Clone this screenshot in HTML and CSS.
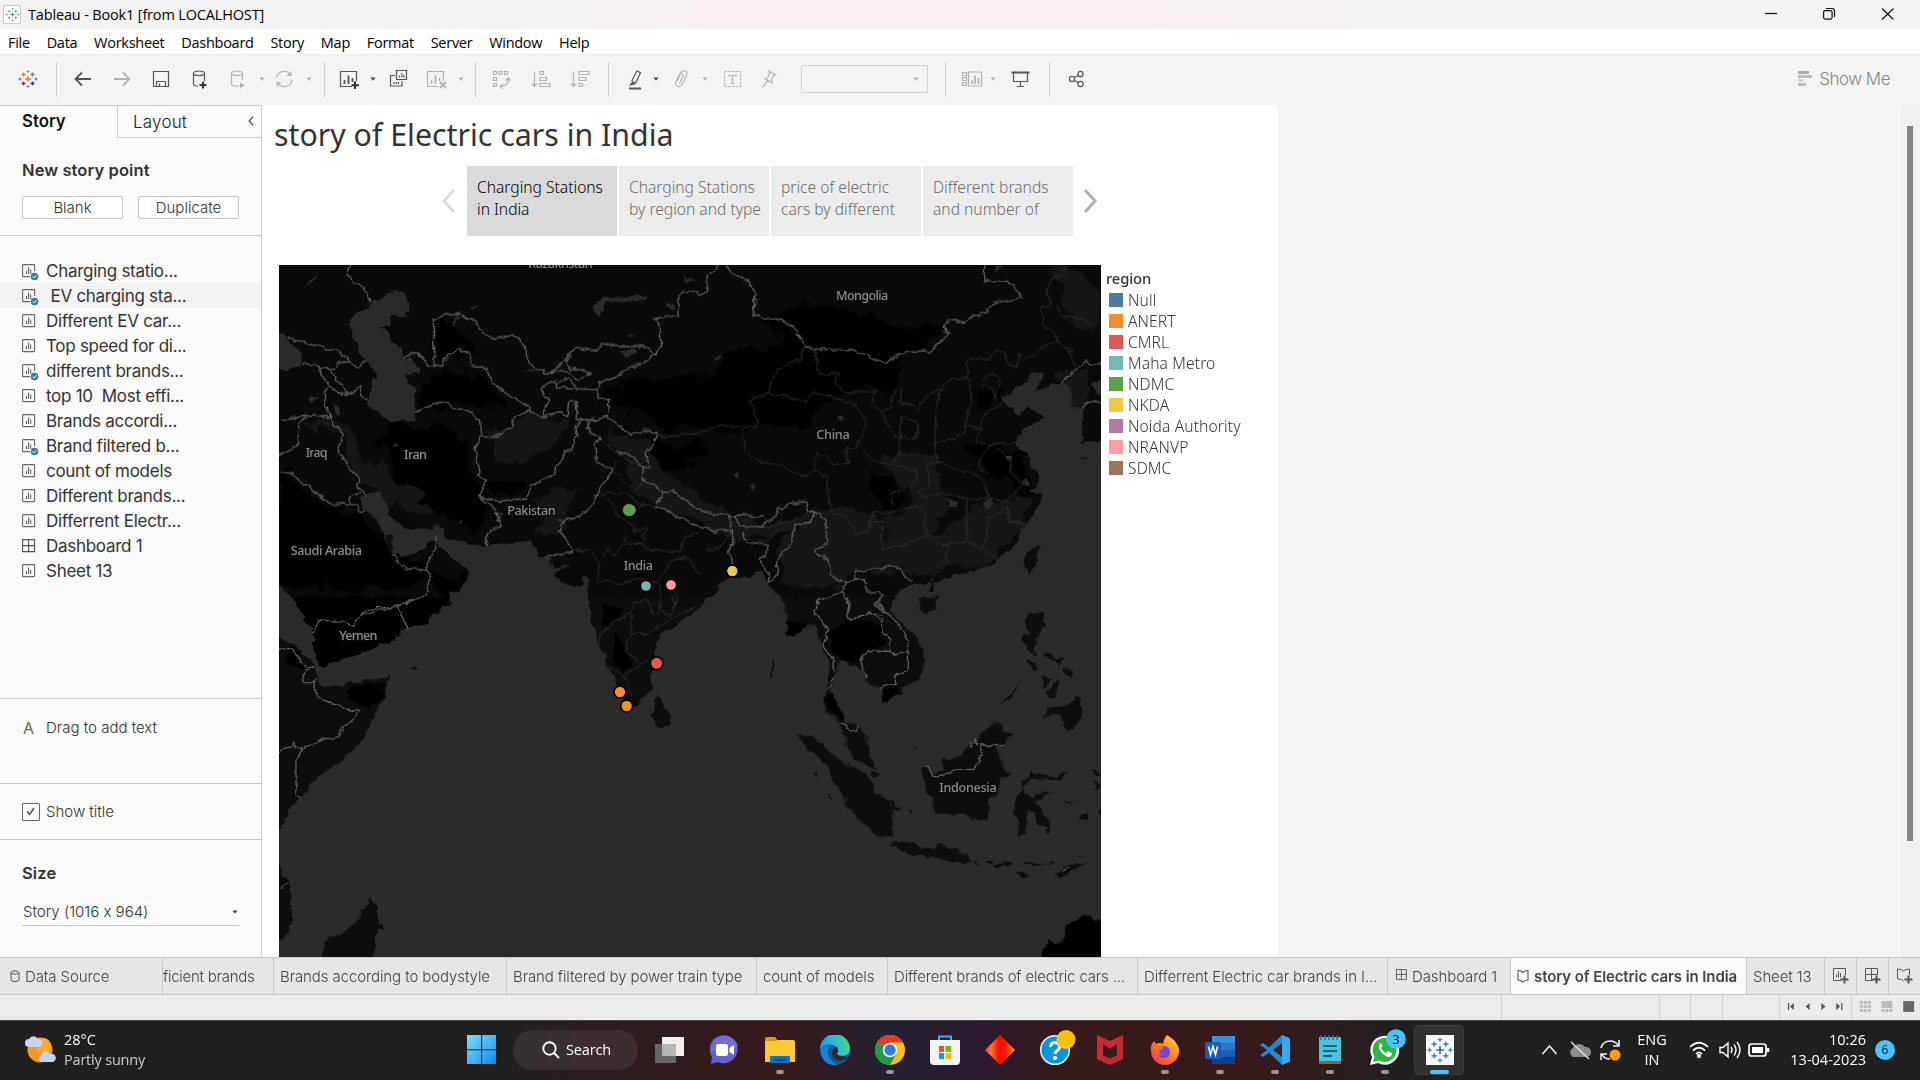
FILE: index.html
```html
<!DOCTYPE html>
<html lang="en">
<head>
<meta charset="utf-8">
<title>Tableau - Book1</title>
<link rel="stylesheet" href="styles.css">
</head>
<body>
<svg class="defs" width="0" height="0" aria-hidden="true">
  <defs>
    <symbol id="sheet" viewBox="0 0 17 17"><rect x=".6" y=".6" width="12" height="12" rx=".8" fill="none" stroke="#666" stroke-width="1.1"/><path d="M4.5 10V7M6.6 10V3.5M8.7 10V5.5" stroke="#555" fill="none"/></symbol>
    <symbol id="used" viewBox="0 0 17 17"><path d="M8 12.600H1.200a.6.6 0 0 1-.6-.6V1.200a.6.6 0 0 1 .6-.6H12a.6.6 0 0 1 .6.6V7" fill="none" stroke="#666" stroke-width="1.1"/><path d="M4.500 10V7M6.600 10V3.500M8.700 10V5.500" stroke="#555" fill="none"/><circle cx="12.500" cy="12.500" r="3.800" fill="#377f9f"/><path d="M10.700 12.600l1.400 1.400 2.200-2.800" stroke="#fff" fill="none"/></symbol>
    <symbol id="dash" viewBox="0 0 17 17"><path d="M.6.600h12v12H.6zM6.600.6v12M.6 6.600h12" fill="none" stroke="#555" stroke-width="1.1"/></symbol>
    <symbol id="book" viewBox="0 0 12 14"><path d="M6 3.500Q4 1.500 1 1.500V11q3 0 5 2 2-2 5-2V1.500Q8 1.500 6 3.500z" fill="none" stroke="#555" stroke-width="1.1"/></symbol>
    <symbol id="caret" viewBox="0 0 8 8"><path d="M1.500 2.500h5L4 5.800z" fill="currentColor"/></symbol>
    <symbol id="sparkle" viewBox="0 0 30 30"><g fill="none" stroke="currentColor"><path d="M15 10.500v9M10.500 15h9" stroke-width="1.800"/><path d="M8.500 5.500v6M5.500 8.500h6M21.500 5.500v6M18.500 8.500h6M8.500 18.500v6M5.500 21.500h6M21.500 18.500v6M18.500 21.500h6" stroke-width="1.400"/><path d="M15 1v5M12.500 3.500h5M15 24v5M12.500 26.500h5M3.500 12.500v5M1 15h5M26.500 12.500v5M24 15h5" stroke-width="1.100"/></g></symbol>
  </defs>
</svg>

<header class="titlebar">
  <span class="app-icon"><svg width="15" height="15"><use href="#sparkle"/></svg></span>
  <span class="app-title">Tableau - Book1 [from LOCALHOST]</span>
  <svg class="winctl" width="150" height="29" viewBox="0 0 150 29" fill="none" stroke="#111" stroke-width="1.200">
    <path d="M15 13.500h12"/><rect x="73.600" y="10.600" width="8.500" height="8.500" rx="1.500"/><path d="M76 8.500h6q2.500 0 2.500 2.500v6"/><path d="M132 8.500l11.500 11M143.500 8.500L132 19.500"/>
  </svg>
</header>

<nav class="menubar"><span>File</span><span>Data</span><span>Worksheet</span><span>Dashboard</span><span>Story</span><span>Map</span><span>Format</span><span>Server</span><span>Window</span><span>Help</span></nav>

<div class="toolbar">
  <svg class="ic" viewBox="0 0 24 24"><g fill="none" stroke-width="1.500"><path d="M12 9v6M9 12h6" stroke="#eb7a34"/><path d="M7.500 5.500v4M5.500 7.500h4" stroke="#e8762d"/><path d="M16.500 5.500v4M14.500 7.500h4" stroke="#5b879b"/><path d="M7.500 14.500v4M5.500 16.500h4" stroke="#c72037"/><path d="M16.500 14.500v4M14.500 16.500h4" stroke="#1f457e"/><path d="M12 3v3M10.500 4.500h3M12 18v3M10.500 19.500h3" stroke="#7199a6" stroke-width="1"/><path d="M4 10.500v3M2.500 12h3M20 10.500v3M18.500 12h3" stroke="#5b6591" stroke-width="1"/></g></svg>
  <i class="sep m16"></i>
  <svg class="ic m14 on" viewBox="0 0 24 24"><path d="M20 12H5M11 5.500L4.500 12l6.500 6.500" stroke-width="1.800"/></svg>
  <svg class="ic m15" viewBox="0 0 24 24"><path d="M4 12h15M13 5.500l6.500 6.500-6.500 6.500" stroke-width="1.800"/></svg>
  <svg class="ic m15 on" viewBox="0 0 24 24"><path d="M4.500 4.500h15v15h-15zM7.500 19.500v-5h9v5M10.500 19v-2.500"/></svg>
  <svg class="ic m14 on" viewBox="0 0 24 24"><path d="M11 19H9q-2.500-.5-2.500-2V6.500M17.500 6.500V14"/><ellipse cx="12" cy="6.300" rx="5.500" ry="2.300"/><path d="M16 14.500v7M12.500 18h7" stroke="#333" stroke-width="2"/></svg>
  <svg class="ic m15" viewBox="0 0 24 24"><path d="M13 19H8q-2.500-.5-2.500-2V6.500M16.500 6.500V13"/><ellipse cx="11" cy="6.300" rx="5.500" ry="2.300"/><path d="M14 15.500l5 3-5 3z" fill="#b4b4b4" stroke="none"/></svg>
  <svg class="caret m8"><use href="#caret"/></svg>
  <svg class="ic m6" viewBox="0 0 24 24"><path d="M4.500 11a7.800 7.800 0 0 1 14-3.500M20 13a7.800 7.800 0 0 1-14 3.500"/><path d="M19.500 4v5h-5zM4.500 20v-5h5z" fill="#b4b4b4" stroke="none"/></svg>
  <svg class="caret m9"><use href="#caret"/></svg>
  <i class="sep m11"></i>
  <svg class="ic m13 on" viewBox="0 0 24 24"><path d="M14 19.500H2.500v-15h16V14"/><path d="M6.500 17v-4M10.500 17V8.500M14.500 15V11" stroke-width="1.800"/><path d="M17 14.500v7.500M13.500 18.300h7.500" stroke="#333" stroke-width="2"/></svg>
  <svg class="caret m7 dark"><use href="#caret"/></svg>
  <svg class="ic m9 on" viewBox="0 0 24 24"><path d="M10.500 3.500h10v9h-10zM9 8.500H4.500v10.500h11.500V14"/><path d="M13.500 10.500v-2M15.800 10.500v-4.500M18 10.500V8M8 17v-2M10.300 17v-2M12.500 17v-2"/></svg>
  <svg class="ic m15" viewBox="0 0 24 24"><path d="M13 19.500H2.500v-15h16V14"/><path d="M6.500 17v-4M10.500 17V8.500M14.500 14v-3" stroke-width="1.600"/><path d="M15 15l6 6M21 15l-6 6" stroke-width="2"/></svg>
  <svg class="caret m8"><use href="#caret"/></svg>
  <i class="sep m10"></i>
  <svg class="ic m13" viewBox="0 0 24 24"><path d="M4.500 4.500h3v3h-3zM10 4.500h3v3h-3zM15.500 4.500h3v3h-3zM4.500 10.500h3v3h-3zM4.500 16.500h3v3h-3z"/><path d="M19.500 11q.5 8-8 8.500M17 13.500l2.500-3 2 3M14 17l-3 2.500 3 2.500"/></svg>
  <svg class="ic m16" viewBox="0 0 24 24"><path d="M5.500 4.500v15M3 16.500l2.500 3 2.500-3M11 4.500h3.500v3H11zM11 10.500h6.500v3H11zM11 16.500h10v3H11z"/></svg>
  <svg class="ic m15" viewBox="0 0 24 24"><path d="M5.500 4.500v15M3 16.500l2.500 3 2.500-3M11 4.500h10v3H11zM11 10.500h7v3h-7zM11 16.500h3.500v3H11z"/></svg>
  <i class="sep m16"></i>
  <svg class="ic m14 on" viewBox="0 0 24 24"><path d="M9 13.500l5-9.500 3.500 1.700L13 15.500l-2.500 2zM7.500 18l2-3 2 1z"/><path d="M6 21.500h12" stroke-width="2"/></svg>
  <svg class="caret m5 dark"><use href="#caret"/></svg>
  <svg class="ic m9" viewBox="0 0 24 24"><path d="M8 14l3.500-8q2-3.500 5-2 2.500 1.500 1 4.500l-4.500 9q-2 3-4.500 1.700-3-1.500-1.500-4.700l3.500-7q1-1.500 2.500-.8t1 2.300l-3.500 7.500"/></svg>
  <svg class="caret m8"><use href="#caret"/></svg>
  <svg class="ic m11" viewBox="0 0 24 24"><path d="M4.500 4.500h16v15h-16z" stroke-dasharray="2.500 1.200"/><path d="M9 10V8.500h7V10M12.500 8.500v8M10.500 16.500h4"/></svg>
  <svg class="ic m13" viewBox="0 0 24 24"><path d="M12 4l6.500 4-2 .8-2 4 .5 3-7-4 2.500-.8 2-4zM10.500 13.500L6 20"/></svg>
  <span class="combo"><svg class="caret"><use href="#caret"/></svg></span>
  <i class="sep m17"></i>
  <svg class="ic m14" viewBox="0 0 24 24"><path d="M2.500 5.500h4v3h-4zM2.500 10.500h4v3h-4zM2.500 15.500h4v3h-4zM8.500 5h13v14h-13z"/><path d="M12 17v-3.500M15 17V8.500M18.500 17v-6" stroke-width="1.800"/></svg>
  <svg class="caret m5"><use href="#caret"/></svg>
  <svg class="ic m11 on" viewBox="0 0 24 24"><path d="M3.500 5.500h18" stroke-width="2"/><path d="M5.500 6v8.500h14V6M12.500 14.500v5M9 19.500h7"/></svg>
  <i class="sep m17"></i>
  <svg class="ic m14 on" viewBox="0 0 24 24"><circle cx="8" cy="12" r="2.600"/><circle cx="16.500" cy="7" r="2.600"/><circle cx="16.500" cy="17" r="2.600"/><path d="M10.300 10.700l4-2.400M10.300 13.300l4 2.400"/></svg>
  <div class="showme"><svg width="15" height="16" viewBox="0 0 15 16"><path d="M0 0h11v3H0z" fill="#a9a9a9"/><path d="M0 4h14v3H0zM0 12h8v3H0z" fill="#bdbdbd"/><path d="M0 8h5v3H0z" fill="#d2d2d2"/></svg><span>Show Me</span></div>
</div>

<main class="work">
  <aside class="side">
    <div class="tabs"><b>Story</b><div class="tab2"><span>Layout</span><svg width="6" height="10" viewBox="0 0 6 10"><path d="M5 .8L1.200 5 5 9.200" fill="none" stroke="#555" stroke-width="1.300"/></svg></div></div>
    <section class="newpoint"><h2>New story point</h2><div class="btns"><span class="btn"><span>Blank</span></span><span class="btn"><span>Duplicate</span></span></div></section>
    <ul class="sheets">
      <li><svg><use href="#used"/></svg><span>Charging statio...</span></li>
      <li class="hover"><svg><use href="#used"/></svg><span>&nbsp;EV charging sta...</span></li>
      <li><svg><use href="#sheet"/></svg><span>Different EV car...</span></li>
      <li><svg><use href="#sheet"/></svg><span>Top speed for di...</span></li>
      <li><svg><use href="#used"/></svg><span>different brands...</span></li>
      <li><svg><use href="#sheet"/></svg><span>top 10&nbsp; Most effi...</span></li>
      <li><svg><use href="#sheet"/></svg><span>Brands accordi...</span></li>
      <li><svg><use href="#used"/></svg><span>Brand filtered b...</span></li>
      <li><svg><use href="#sheet"/></svg><span>count of models</span></li>
      <li><svg><use href="#sheet"/></svg><span>Different brands...</span></li>
      <li><svg><use href="#sheet"/></svg><span>Differrent Electr...</span></li>
      <li><svg><use href="#dash"/></svg><span>Dashboard 1</span></li>
      <li><svg><use href="#sheet"/></svg><span>Sheet 13</span></li>
    </ul>
    <section class="dragtext"><em>A</em><span>Drag to add text</span></section>
    <section class="showtitle"><i class="check"><svg width="16" height="16" viewBox="0 0 16 16"><path d="M4 7.500l2.500 3L11 4" fill="none" stroke="#555" stroke-width="1.500"/></svg></i><span>Show title</span></section>
    <section class="size"><h2>Size</h2><div class="select"><span>Story (1016 x 964)</span><svg class="caret dark"><use href="#caret"/></svg></div></section>
  </aside>

  <article class="story">
    <h1><span>story of Electric cars in India</span></h1>
    <div class="points">
      <svg width="15" height="26" viewBox="0 0 15 26"><path d="M13 2L3 13l10 11" fill="none" stroke="#dcdcdc" stroke-width="3"/></svg>
      <div class="point active"><span>Charging Stations<br>in India</span></div>
      <div class="point"><span>Charging Stations<br>by region and type</span></div>
      <div class="point"><span>price of electric<br>cars by different</span></div>
      <div class="point"><span>Different brands<br>and number of</span></div>
      <svg width="15" height="26" viewBox="0 0 15 26"><path d="M2 2l10 11L2 24" fill="none" stroke="#b0b0b0" stroke-width="3"/></svg>
    </div>
    <div class="view">
      <svg class="map" viewBox="27 30 2466 2076">
        <defs>
          <filter id="rough" filterUnits="userSpaceOnUse" x="0" y="0" width="2520" height="2130"><feTurbulence type="fractalNoise" baseFrequency=".035" numOctaves="3" seed="4"/><feDisplacementMap in="SourceGraphic" scale="22" xChannelSelector="R" yChannelSelector="G"/></filter>
          <filter id="soft" filterUnits="userSpaceOnUse" x="0" y="0" width="2520" height="2130"><feTurbulence type="fractalNoise" baseFrequency=".012" numOctaves="4" seed="9" result="n"/><feGaussianBlur in="SourceGraphic" stdDeviation="5"/><feDisplacementMap in2="n" scale="110" xChannelSelector="R" yChannelSelector="G"/></filter>
        </defs>
        <rect x="0" y="0" width="2520" height="2130" fill="#2b2b2b"/>
        <rect x="0" y="0" width="2520" height="1040" fill="#0a0a0a"/>
        <g filter="url(#soft)">
          <g fill="#000">
            <path d="M0 780L200 760 330 840 480 940 600 950 600 1000 60 1000 0 960z"/><path d="M27 640L80 680 170 760 240 760 240 830 27 830z"/>
            <path d="M330 540L480 500 590 560 630 700 640 840 520 800 440 760 360 660z"/><path d="M450 360L560 340 640 370 700 440 590 470 460 430z"/><path d="M495 210L570 200 600 280 500 320z"/>
            <path d="M960 430L1100 380 1300 360 1560 240 1800 200 2000 240 1900 290 1850 400 1700 420 1630 470 1600 510 1400 520 1180 520 1040 460z"/><path d="M1440 200L1640 140 1900 210 2020 190 1960 280 1800 300 1620 270z"/>
            <path d="M1110 560L1290 560 1320 600 1200 640 1140 620z"/><path d="M640 690L760 680 760 740 660 740z"/>
            <path d="M2080 570L2180 560 2280 600 2260 720 2150 660zM2110 400L2190 380 2200 440 2110 470z"/><path d="M1810 660L1890 640 1920 700 1860 760 1800 720z"/>
          </g>
          <g fill="#131313">
            <path d="M1030 500L1160 620 1300 740 1440 800 1590 770 1640 790 1500 850 1340 830 1170 760 1080 680z"/><path d="M1640 780L1760 760 1840 840 2000 850 2200 720 2280 720 2240 860 2160 930 1960 960 1800 960 1700 1000 1540 1000 1500 980 1560 850z"/>
            <path d="M1830 600L1990 600 2030 760 1960 880 1840 820 1940 740z"/><path d="M120 490L230 600 330 740 500 800 420 720 250 560 160 470z"/><path d="M640 540L760 480 880 500 860 580 740 620z"/>
            <path d="M2340 40L2470 80 2470 220 2380 180zM2340 340L2460 350 2440 460 2380 450z"/><path d="M800 740L900 700 880 800 800 860z"/>
          </g>
        </g>
        <rect x="0" y="1035" width="2520" height="1100" fill="#2b2b2b"/>
        <g filter="url(#rough)">
          <g fill="#2b2b2b">
            <path d="M350 115L400 108 418 125 415 155 405 178 428 182 362 182 358 200 365 214 335 212 355 230 363 265 385 280 400 290 398 305 388 320 420 305 435 325 455 340 445 355 420 360 405 352 408 370 412 385 430 395 433 405 434 478 437 492 400 500 365 500 340 488 328 475 305 465 295 440 300 400 305 372 328 365 318 350 300 335 285 315 268 290 255 265 252 232 235 208 260 172 285 165 300 145z"/>
            <path d="M0 225L27 235 50 255 78 275 95 295 97 320 70 342 45 348 0 335z"/>
            <path d="M270 730L295 710 330 715 352 750 360 780 395 810 430 825 470 820 495 825 492 812 510 808 522 825 522 850 580 862 645 870 700 865 780 858 800 880 810 905 850 910 840 930 860 940 895 932 855 958 870 975 905 998 935 990 942 960 950 960 955 1020 962 1080 505 1080 520 1050 540 1045 540 1010 568 1008 585 985 595 955 585 930 555 915 530 895 510 870 500 855 480 860 440 895 400 905 370 895 350 870 340 840 330 810 300 780 280 760z"/>
            <path d="M0 970L27 990 50 1015 70 1030 95 1080 0 1080zM975 155L1000 125 1060 128 1130 123 1130 135 1080 140 1010 142 1000 160 990 190 975 175zM1045 292L1095 280 1100 290 1075 303zM108 90L145 48 130 80zM1190 140L1210 150 1205 165 1190 155zM1237 60L1285 85 1250 78zM555 180L565 180 560 210 553 212zM595 155L622 152 610 162zM1070 235L1102 240 1075 242zM190 445L203 455 210 480 195 475zM115 432L130 418 148 430 125 442zM522 315L535 300 545 310 530 325zM370 567L382 565 385 577 372 578zM678 770L695 775 690 785 678 782zM566 797L577 795 572 806zM765 345L810 350 780 353z"/>
            <path transform="translate(1290)" d="M905 425L950 400 980 375 1000 350 1025 352 1028 372 1000 415 1030 400 1060 388 1085 388 1115 395 1115 440 1108 455 1150 460 1145 490 1150 545 1143 570 1230 553 1230 1080 570 1080 575 1045 600 1005 640 985 690 980 690 1010 700 1012 695 985 740 970 790 955 880 930 890 912 930 885 955 855 965 820 990 790 1010 765 1025 735 1030 718 985 705 1015 690 1018 665 990 625 975 590 945 560 965 530 1000 505 1035 488 1020 475 975 458 960 480 940 475 940 460 915 445zM-20 1050L50 1015 60 980 100 970 165 960 180 945 195 970 205 995 245 1030 260 1080 -20 1080zM1173 385L1203 376 1230 376 1230 420 1203 417 1180 408zM408 480L425 478 438 492 430 502 412 495zM38 310L55 300 70 308 50 318zM100 660L112 650 122 662 110 670zM145 692L168 690 155 704zM740 735L775 740 770 755 745 755zM850 745L870 730 878 745 865 762zM968 680L980 670 985 690 970 690zM918 602L932 598 930 625zM885 35L905 30 890 50z"/>
          </g>
          <g fill="#0b0b0b">
            <path d="M348 845L362 840 366 880 355 892 346 870z"/>
            <path transform="translate(1290)" d="M1010 870L1018 872 1010 915 990 960 973 930 980 895zM660 1045L690 1025 717 1025 705 1060 680 1075 657 1065zM1142 607h14v6h-14zM985 1070L1030 1075 1030 1120 980 1120z"/>
          </g>
          <g transform="translate(0 1035)">
            <path fill="#050505" d="M75 0L90 40 125 85 128 95 130 150 145 195 160 200 210 178 250 172 290 155 340 130 375 115 385 110 387 95 412 85 435 75 468 72 475 50 500 45 515 20 540 17 538 -10 70 -10z"/>
            <path fill="#0e0e0e" d="M0 95L60 130 90 150 130 195 140 205 140 235 150 250 170 265 205 255 260 245 300 240 345 230 357 225 355 262 348 290 320 330 300 375 275 415 245 455 210 490 170 510 130 545 95 595 55 630 48 655 32 682 0 700zM0 740L27 785 40 825 60 845 65 880 62 930 70 960 60 990 45 1010 0 1030zM163 1090L160 1045 175 1010 215 1000 265 960 268 935 290 925 300 893 320 920 328 960 338 990 325 990 318 1010 310 1090zM420 203L440 201 443 206 425 209zM1157 285L1175 300 1200 345 1200 375 1175 387 1155 380 1148 345z"/>
            <path fill="#0a0a0a" d="M950 -15L960 40 970 80 985 120 1000 155 1010 195 1030 225 1045 260 1060 300 1075 330 1085 332 1110 300 1125 290 1147 265 1142 220 1157 190 1155 120 1170 105 1210 85 1240 60 1300 12 1300 -15z"/>
            <path fill="#000" d="M100 0L520 0 470 50 330 90 240 90 140 60zM230 265L345 245 340 290 300 325 240 300zM60 140L100 180 100 215 50 190z"/>
            <path fill="#000" d="M1000 10L1060 30 1040 60 1000 80zM1040 90L1060 140 1090 190 1060 220 1030 190z" opacity=".7"/>
          </g>
          <g transform="translate(1290 1035)">
            <path fill="#101010" d="M240 -10L262 40 260 105 285 110 325 70 345 80 370 145 385 190 380 255 388 290 372 300 372 325 395 350 425 385 440 440 470 480 528 510 525 490 508 465 508 420 475 380 430 365 410 300 392 298 392 255 412 220 415 178 442 178 445 198 480 205 495 235 510 255 548 265 550 312 600 280 605 262 660 240 672 205 670 150 640 100 600 65 570 30 575 -10z"/>
            <path fill="#060606" d="M262 60L325 68 285 110 262 105zM385 100L440 60 500 60 550 80 560 140 500 150 480 190 415 175 390 150zM548 265L600 262 600 280 550 312zM380 260L408 300 440 370 400 345 375 310z"/>
            <path fill="#0f0f0f" d="M657 -8L657 30 680 40 705 20 715 -8zM287 400L345 412 360 430 430 490 490 515 515 545 520 580 550 590 580 630 575 710 540 712 490 670 450 625 410 560 385 520 380 500 320 445zM665 515L680 498 700 520 725 512 728 480 780 468 810 430 840 425 845 400 885 362 905 375 910 395 945 407 920 415 915 435 890 440 908 480 912 510 938 525 905 530 895 580 868 600 860 660 820 660 790 640 745 645 700 630 695 590 680 580z"/>
            <path fill="#090909" d="M572 735L580 718 645 730 660 742 700 748 715 733 770 745 775 758 810 770 815 790 740 782 680 768 630 762zM968 540L995 520 1070 530 1108 510 1085 540 1060 540 990 535 970 560 975 585 1000 595 1058 570 1010 605 1030 640 1050 680 1015 675 1005 640 985 625 978 650 975 705 955 705 955 650 938 640 950 600 965 570zM982 35L1028 38 1022 60 1033 75 1010 120 1005 140 1015 165 990 160 970 120 968 98 985 105zM980 180L1005 185 1008 208 995 208zM1025 160L1050 160 1070 185 1088 170 1080 195 1050 180zM1023 228L1050 235 1035 262zM1090 205L1118 210 1118 240 1095 225zM1070 232L1078 250 1062 290 1052 295 1040 280 1060 265zM1025 355L1040 330 1068 320 1095 320 1115 310 1125 290 1138 300 1148 350 1135 360 1118 392 1100 388 1085 360 1080 340 1040 345zM895 315L920 292 955 258 950 272 920 300zM815 785L842 788 830 793zM858 785L875 785 872 797zM880 792L940 785 935 795 890 802zM968 790L1000 785 1030 795 1070 785 1060 792 1000 797zM942 817L965 815 990 830 980 836zM1112 795L1165 788 1120 808 1075 838 1070 820zM1130 770L1152 767 1140 773zM562 600L580 602 600 632 580 628zM628 628L642 628 640 638zM340 515L355 520 352 532zM380 582L392 592 390 602zM1138 645L1165 645 1155 655 1142 652zM1190 635L1210 635 1210 655zM1090 602L1135 605 1100 607zM1175 510L1203 520 1190 530zM1180 545L1203 560 1190 570zM1030 685L1052 680 1045 705zM218 178L222 190 215 228 211 226zM638 442h7v6h-7zM515 515L540 525 520 528z"/>
            <path fill="#040404" d="M1030 1090L1028 1045 1048 1018 1070 1035 1095 1010 1095 985 1120 960 1160 940 1230 980 1230 1090z"/>
          </g>
        </g>
        <g filter="url(#rough)" fill="none" stroke-linejoin="round">
          <g stroke="#363636" stroke-width="2.800">
            <path d="M990 550L1040 590 1110 640M1040 620L1030 650 1060 680 1090 710 1120 680M990 720L1060 712 1090 730 1120 750 1160 760M1000 725L1030 745 1040 780 1080 800 1090 830 1125 820 1120 870 1060 860 1070 830M910 885L960 888 990 930 985 980M1000 905L1010 880 1030 900 1060 870 1110 870 1140 885 1230 890 1240 850 1290 830M985 980L1060 985 1110 970 1160 985 1200 920 1250 905 1290 960M1165 540L1220 545 1250 535 1290 535M1165 990L1175 1040 1160 1080M1090 1045L1130 1035 1150 1080M1200 1000L1220 1030 1200 1080"/>
            <path transform="translate(1290)" d="M0 530L60 510 130 518 170 515 165 480 150 435 205 415 220 360 260 325 305 310 310 280 340 282 355 350 375 358 420 350 405 385 440 415 490 410 525 405 520 450 545 470 580 455 575 420 605 405 600 440 655 465 680 425 720 400 750 375 805 365 805 310 850 315 890 290 915 295 920 325 945 335 960 295 970 315 1040 270 1070 265 1065 230 1035 215 1020 160 1055 150 1035 95 1090 55 1098 30M1075 155L1080 180 1150 190 1190 225M1070 260L1110 280 1125 340M205 415L260 425 320 440 335 410 400 425 470 455 495 500 490 540 470 575 440 580 450 620 400 630 350 590 345 640 310 665 250 635 170 615 135 590 125 520M345 640L380 670 390 740 395 770 440 790 470 835 500 830 520 770 560 775 600 765 650 755 670 775 680 840 720 840M545 470L570 520 600 550 650 550 655 510 600 485 600 550 595 600 575 630 520 620 490 580M720 400L705 470 710 520 700 570 715 620 760 640 830 660 860 690 860 740M700 570L790 540 800 490 815 420 805 365M795 510L850 520 830 560 870 570 950 560M840 510L860 470 910 450M845 375L880 350 900 370 895 400 885 430 880 400 845 385M870 570L830 620 860 660M890 580L935 610 930 650 970 685 920 740 870 730M575 630L650 650 650 680 600 710 570 715 580 750M720 620L680 625 690 690 650 710 680 730 720 715 800 730 860 730M800 730L800 860 730 870 680 845 600 870 545 880 550 800 520 800M745 870L740 920 690 980M800 860L850 880 870 790 920 760 930 800 980 805M850 880L890 910M20 885L60 880 90 830M135 820L210 815 300 790M130 850L200 860 240 820"/>
            <path transform="translate(0 1035)" d="M1100 0L1080 40 1030 70 995 95 990 125M1085 40L1085 105 1140 98 1200 60 1240 35 1275 20M1160 0L1180 40 1200 50 1215 10 1200 -10M1085 105L1070 125 1075 160 1115 190 1150 185M1115 190L1090 210 1060 230 1020 200M1060 230L1080 270 1080 300"/>
          </g>
          <g stroke="#5c5c5c" stroke-width="4.200">
            <path d="M240 20L232 55 245 82 275 90 295 120 300 140M50 250L90 258 130 270 165 285 200 285 235 305 232 320 265 335 287 318M95 327L148 335 155 365 178 388 165 410 170 460 190 510 220 530 205 590 235 630 260 660 265 695 285 720M148 340L195 340 205 320 235 325M185 345L200 380 215 385 230 420 275 395 280 430 298 440M178 390L215 420 230 420M27 498L75 488 125 480 178 485M115 480L87 505 82 572 27 600M27 648L60 655 110 690 180 745 235 748 250 718 272 716M235 748L260 750 262 765 285 765M392 320L410 300 445 293 475 333 520 333 522 315 545 298 562 280 600 298 605 330 650 338 675 390 740 435 783 455 783 472M492 333L490 192 565 172 620 205 658 250 740 245 768 280 770 305 788 340 820 345 838 358 880 320 915 280 975 288 995 262 1040 275 1120 275 1160 298 1175 250 1165 200 1152 190 1225 183 1220 150 1240 105 1290 118M435 477L475 452 525 443 560 460 595 470 632 500 635 540 615 580 625 640 627 665 652 678 628 722 680 770 692 820 660 830 648 870M635 540L670 550 725 515 735 480 783 470 822 487 870 470 890 485 900 440 915 440 920 500 965 490 1015 485 1020 430 985 430 980 405 880 397 860 400 858 375 810 400 830 430 822 487M838 358L870 345 895 350 920 375 960 355 930 340 905 345 885 325 910 295M980 405L990 380 1035 368 1060 350 1160 298M858 385L890 370 920 395M920 500L955 495 1010 485 1050 515 1085 540 1140 522 1162 540 1150 575 1125 590 1138 635 1115 635 1075 600 1040 590M955 500L950 520 990 550 975 570 980 620 1025 645 990 700 970 745 930 785 870 800 870 830 890 850 905 890 860 895 830 910M628 722L680 740 775 725 780 690 810 680 855 660 860 630 885 610 880 590 905 585 920 540 915 515 940 500M1115 635L1120 675 1150 690 1180 712 1160 755 1200 770 1250 800 1290 812M1180 712L1205 708 1290 765M365 895L398 937 468 945 482 965 465 1022 383 1053 273 1080M468 945L490 890 500 880 497 840"/>
            <path transform="translate(1290)" d="M0 118L20 105 22 60 45 50 55 30M82 30L100 60 145 80 165 110 162 185 240 192 290 225 318 278 380 285 460 283 480 300 555 322 620 292 690 290 745 240 733 220 745 190 795 203 820 180 862 172 880 145 965 128 960 110 920 75 850 80 855 30M1085 388L1110 360 1155 318 1200 330 1203 305M1150 460L1165 440 1203 440M0 762L45 780 105 785 118 810 190 820 200 795 210 792 265 745 320 740 318 770 345 770 378 795 380 860 350 885 355 905 385 912 395 960 440 985 465 980 470 950 540 940 570 925 600 940 605 960 635 978M105 785L130 775 190 790M0 815L60 828 95 825 85 790 105 785M95 825L105 860 85 890 100 925M125 830L140 865 205 870 200 905 175 915 185 930 210 960 205 995M345 770L330 800 285 815 270 870 235 905 230 960 210 980M440 985L425 1010 360 1035 345 1080M425 1010L450 1040 445 1080M465 980L490 970 495 1000 550 1020 525 1045 570 1080M500 1075L550 1080"/>
            <path transform="translate(0 1035)" d="M125 95L138 90 140 63 240 68 250 78 275 40 300 28 380 18 440 0M383 20L412 88M27 147L60 150 90 175 115 205 135 205M115 205L100 230 102 248 130 248 138 235M130 248L125 262 160 300 240 330 270 332 190 417 160 415 130 435 100 440 78 442 70 433 27 458M100 440L78 475 78 578 95 600M27 863L62 845"/>
            <path transform="translate(1290 1035)" d="M358 0L348 35 385 95 368 130 395 175 407 225 382 265M440 0L450 10 445 60 490 45 510 35 545 60 550 100 572 115 570 155 505 152 482 180 495 230M570 155L585 162 625 150 625 210 580 228 585 250 540 265M525 0L570 45 615 95 625 150M418 370L445 378 450 392 468 392 475 380M680 495L708 528 750 522 760 510 820 512 835 480 850 435 912 437M805 425L815 440 825 420 838 435M1090 815L1110 802"/>
          </g>
        </g>
        <g class="labels">
          <text x="775" y="38" textLength="193">Kazakhstan</text><text x="107" y="607" textLength="66">Iraq</text><text x="402" y="611" textLength="69">Iran</text><text x="712" y="780" textLength="145">Pakistan</text><text x="62" y="901" textLength="214">Saudi Arabia</text><text x="1061" y="945" textLength="88">India</text><text x="1698" y="136" textLength="157">Mongolia</text><text x="1639" y="551" textLength="100">China</text><text x="208" y="1155" textLength="114">Yemen</text><text x="2008" y="1611" textLength="172">Indonesia</text>
        </g>
        <g stroke="#000" stroke-width="5">
          <circle cx="1082" cy="765" r="18" fill="#b07aa1"/><circle cx="1077" cy="765" r="18" fill="#59a14f" stroke="#7a8a58" stroke-width="1.500"/><circle cx="1128" cy="993" r="17" fill="#76b7b2"/><circle cx="1203" cy="990" r="17" fill="#ff9da7"/><circle cx="1387" cy="948" r="18" fill="#edc948"/><circle cx="1160" cy="1225" r="19" fill="#e15759"/><circle cx="1050" cy="1311" r="18" fill="#f28e2b"/><circle cx="1070" cy="1353" r="18" fill="#f28e2b"/>
        </g>
      </svg>
      <div class="legend"><h3><span>region</span></h3>
        <p><i class="c1"></i><span>Null</span></p><p><i class="c2"></i><span>ANERT</span></p><p><i class="c3"></i><span>CMRL</span></p><p><i class="c4"></i><span>Maha Metro</span></p><p><i class="c5"></i><span>NDMC</span></p><p><i class="c6"></i><span>NKDA</span></p><p><i class="c7"></i><span>Noida Authority</span></p><p><i class="c8"></i><span>NRANVP</span></p><p><i class="c9"></i><span>SDMC</span></p>
      </div>
    </div>
  </article>
  <div class="scroll"><i></i></div>
</main>

<footer class="sheettabs">
  <div class="t t1"><svg width="10" height="13" viewBox="0 0 10 13"><path d="M1 2.500v7.500q0 1.500 4 1.500t4-1.500V2.500" fill="none" stroke="#555"/><ellipse cx="5" cy="2.500" rx="4" ry="1.600" fill="none" stroke="#555"/></svg><span>Data Source</span></div>
  <div class="t t2"><span>ficient brands</span></div>
  <div class="t t3"><span>Brands according to bodystyle</span></div>
  <div class="t t4"><span>Brand filtered by power train type</span></div>
  <div class="t t5"><span>count of models</span></div>
  <div class="t t6"><span>Different brands of electric cars ...</span></div>
  <div class="t t7"><span>Differrent Electric car brands in I...</span></div>
  <div class="t t8"><svg width="14" height="14"><use href="#dash"/></svg><span>Dashboard 1</span></div>
  <div class="t t9"><svg width="12" height="14"><use href="#book"/></svg><span>story of Electric cars in India</span></div>
  <div class="t t10"><span>Sheet 13</span></div>
  <div class="t add"><svg width="16" height="16" viewBox="0 0 16 16" fill="none" stroke="#555"><path d="M8 12.500H.5V.5h12V7M3.500 9.500v-3M5.500 9.500v-6M7.500 9.500V5"/><path d="M11.500 7.500v8M7.500 11.500h8" stroke-width="2"/></svg></div>
  <div class="t add"><svg width="16" height="16" viewBox="0 0 16 16" fill="none" stroke="#555"><path d="M8 12.500H.5V.5h12V7M6.500.5v12M.5 6.500h12"/><path d="M11.500 7.500v8M7.500 11.500h8" stroke-width="2"/></svg></div>
  <div class="t add"><svg width="16" height="16" viewBox="0 0 16 16" fill="none" stroke="#555"><path d="M12.500 7V1Q8 1 6.500 3 5 1 .5 1v10q4.500 0 6 2"/><path d="M11.500 7.500v8M7.500 11.500h8" stroke-width="2"/></svg></div>
</footer>

<div class="status"><i class="s1"></i><i class="s2"></i><i class="s3"></i><i class="s4"></i>
  <svg class="s5" width="72" height="25" viewBox="0 0 72 25" fill="#555"><path d="M8 8h1.300v7H8zM14 8v7l-4-3.500zM30 8v7l-4-3.500zM42 8v7l4-3.500zM57 8v7l4-3.500zM62 8h1.300v7H62z"/></svg>
  <svg class="s6" width="69" height="25" viewBox="0 0 69 25"><path d="M8 6h3v3H8zM12 6h3v3h-3zM16 6h3v3h-3zM8 10h3v3H8zM12 10h3v3h-3zM16 10h3v3h-3zM8 14h3v3H8zM12 14h3v3h-3zM16 14h3v3h-3zM30 6h11v7H30zM30 14h3v3h-3zM34 14h3v3h-3zM38 14h3v3h-3z" fill="#bbb"/><path d="M52 6h11v11H52z" fill="#666"/></svg>
</div>

<div class="taskbar">
  <div class="weather"><svg width="32" height="32" viewBox="0 0 32 32"><circle cx="16" cy="16" r="12.500" fill="#f5922a"/><circle cx="19" cy="12" r="8" fill="#f9ac30"/><path d="M5 13a4 4 0 0 1 0-8 5 5 0 0 1 9 0 4 4 0 0 1 1 8zM17 28a4 4 0 0 1 0-7 5 5 0 0 1 9-1 4 4 0 0 1 3 8z" fill="#c3d6f6"/></svg><p><span>28°C</span><small>Partly sunny</small></p></div>
  <svg class="start" width="30" height="30" viewBox="0 0 30 30"><defs><linearGradient id="wg" x1="0" y1="0" x2="1" y2="1"><stop offset="0" stop-color="#7fe0fb"/><stop offset="1" stop-color="#0a8bf0"/></linearGradient></defs><path d="M0 0h14.200v14.200H0zM15.200 0H29v14.200H15.200zM0 15.200h14.200V29H0zM15.200 15.200H29V29H15.200z" fill="url(#wg)"/></svg>
  <div class="search"><svg width="20" height="20" viewBox="0 0 20 20"><circle cx="8.500" cy="8.500" r="6.200" fill="none" stroke="#fff" stroke-width="1.900"/><path d="M13 13l5 5" stroke="#fff" stroke-width="2"/></svg><span>Search</span></div>
  <div class="apps">
    <span><svg viewBox="0 0 30 30"><path d="M0 9h21v19H0z" fill="#666"/><path d="M7 2h22v19H7z" fill="#f0f0f0"/><path d="M7 9h14v12H7z" fill="#b5b5b5"/></svg></span>
    <span><svg viewBox="0 0 30 30"><path d="M1 29l1-7a14 14 0 1 1 6 5z" fill="#655fd0"/><path d="M1 15A14 14 0 0 1 28 10L15 22z" fill="#8276d0" opacity=".6"/><rect x="6" y="9" width="12" height="12" rx="2.500" fill="#fff"/><path d="M19.500 13l4.500-3v10l-4.500-3z" fill="#fff"/></svg></span>
    <span class="run"><svg viewBox="0 0 30 30"><path d="M0 4q0-2 2-2h8l3 4H0z" fill="#d99a12"/><path d="M0 6h11l2-1h15q2 0 2 2v20H0z" fill="#fcc934"/><path d="M5 21h20v7H5z" fill="#1271c5"/><path d="M9 24h12v2H9z" fill="#0b4d8c"/></svg></span>
    <span><svg viewBox="0 0 30 30"><defs><linearGradient id="eg" x1="0" y1=".3" x2="1" y2="0"><stop offset="0" stop-color="#1c9de0"/><stop offset=".5" stop-color="#2cc3cf"/><stop offset="1" stop-color="#5fdb5a"/></linearGradient></defs><circle cx="15" cy="15" r="15" fill="#0c59a4"/><path d="M0 14A15 15 0 0 1 30 14q0 7-8 7-6 0-5-3 2-3 0-6Q8 6 0 14z" fill="url(#eg)"/><path d="M0 14q4-5 11-3-5 4-3 9 3 8 10 9.600Q2 32 0 14z" fill="#1b7fd6"/><path d="M22 21q-5 0-5-3 2 0 0-6-6 1-5 8 2 6 9 6 4-1 7-4.500-3 1-6-.5z" fill="#34242c"/></svg></span>
    <span class="run"><svg viewBox="0 0 30 30"><circle cx="15" cy="15" r="15" fill="#fbc116"/><path d="M15 15L2 7.500A15 15 0 0 1 28 7.500H15z" fill="#e33b2e"/><path d="M2 7.500A15 15 0 0 0 15 30l6.500-11.200L15 15z" fill="#229a4c"/><circle cx="15" cy="15" r="7.300" fill="#fff"/><circle cx="15" cy="15" r="5.700" fill="#2f7de8"/></svg></span>
    <span><svg viewBox="0 0 30 30"><path d="M9 6V1.500h12V6" stroke="#35b4f2" stroke-width="2" fill="none"/><path d="M0 5h30v21q0 4-4 4H4q-4 0-4-4z" fill="#f3f3f3"/><path d="M9 11h5v6H9z" fill="#f05022"/><path d="M15.500 11H21v6h-5.500z" fill="#7db900"/><path d="M9 18h5v6H9z" fill="#00a3ee"/><path d="M15.500 18H21v6h-5.500z" fill="#feb800"/></svg></span>
    <span><svg viewBox="0 0 30 30"><defs><linearGradient id="dg"><stop offset="0" stop-color="#e43a8c"/><stop offset=".2" stop-color="#ff7a1a"/><stop offset=".45" stop-color="#ff0a0a"/><stop offset=".7" stop-color="#ff1a08"/><stop offset="1" stop-color="#ff9f20"/></linearGradient></defs><path d="M15 0l15 15-15 15L0 15z" fill="url(#dg)"/></svg></span>
    <span><svg viewBox="0 0 30 30" overflow="visible"><circle cx="15" cy="15" r="14.300" fill="#0b94d6" stroke="#e9f4fb" stroke-width="1.500"/><path d="M10.500 12q0-4.500 4.500-4.500T19.500 12q0 2.500-3 4-1.500 1-1.500 3" stroke="#fff" stroke-width="3" fill="none"/><circle cx="15" cy="23" r="2" fill="#fff"/><circle cx="26" cy="4.500" r="9.500" fill="#fdbf0f"/></svg></span>
    <span><svg viewBox="0 0 30 30"><path d="M2 0l13 6L28 0v24l-13 6L2 24zM8 9v11.500l7 3 7-3V9l-7 5z" fill="#c62b2f" fill-rule="evenodd"/></svg></span>
    <span class="run"><svg viewBox="0 0 30 30"><defs><linearGradient id="fg" x1="1" y1="0" x2=".2" y2="1"><stop offset="0" stop-color="#ffdf3c"/><stop offset=".5" stop-color="#ff8a1e"/><stop offset="1" stop-color="#f5314f"/></linearGradient></defs><path d="M17 0q8 5 9 8 3 3 3 8a14 14 0 1 1-28 0Q0 11 4 6l2 3q4-2 7 0 1-6 4-9z" fill="url(#fg)"/><circle cx="14" cy="17" r="6" fill="#7542d8"/><path d="M5 11q6-2 9 1-1 3-5 3 0 4 4 5-6 1-8-9z" fill="#ff6a25"/></svg></span>
    <span class="run"><svg viewBox="0 0 30 30"><path d="M7 1h23v14H7z" fill="#3a90e0"/><path d="M7 8h23v7H7z" fill="#2a76cf"/><path d="M7 15h23v7H7z" fill="#1b5cb8"/><path d="M7 22h23v7H7z" fill="#133f8f"/><rect x="0" y="7" width="16" height="17" rx="1.500" fill="#1d59b8"/><path d="M3.500 11.500l2 8 2.500-8 2.500 8 2-8" stroke="#fff" stroke-width="1.600" fill="none"/></svg></span>
    <span class="run"><svg viewBox="0 0 30 30"><path d="M22 0l8 3.500v23L22 30 9 17.500 3 22l-3-2 7-5-7-5 3-2 6 4.500z" fill="#1f8ad2"/><path d="M22 0l8 3.500v23L22 30z" fill="#35a8ee"/><path d="M22 8v14l-9-7z" fill="#3a1a1d"/></svg></span>
    <span class="run"><svg viewBox="0 0 30 30"><path d="M4 2h22v27H4z" fill="#4bc5de"/><path d="M4 26h22v3H4z" fill="#a55b2d"/><path d="M6 0v5M10 0v5M14 0v5M18 0v5M22 0v5" stroke="#1c7a96" stroke-width="1.500"/><path d="M8 11h14M8 16h14M8 21h9" stroke="#176482" stroke-width="2"/></svg></span>
    <span class="run"><svg viewBox="0 0 30 30" overflow="visible"><path d="M0 30l2-8A14.500 14.500 0 1 1 8 28z" fill="#fff"/><path d="M3 27l1.500-5.500A12 12 0 1 1 9 25.600z" fill="#2cb742"/><path d="M10 8q-2 2-1 5 3 7 9 9 4 0 4-4l-4-2-2 2q-3-1-5-5l1.500-2L11 8z" fill="#fff"/><circle cx="26" cy="4" r="9.800" fill="#4cc2ff"/><text x="26" y="8.800" text-anchor="middle" font-size="13" fill="#111">3</text></svg></span>
    <span class="act"><svg viewBox="0 0 30 30"><path d="M1 0h28v30H1z" fill="#f6f6f6"/><g color="#3a6f93" transform="translate(1.500 1.500) scale(.9)"><use href="#sparkle" width="30" height="30"/></g></svg></span>
  </div>
  <div class="tray">
    <svg width="80" height="30" viewBox="0 0 80 30" fill="none"><path d="M1.500 19l7-8 7 8" stroke="#eee" stroke-width="1.600"/><path d="M32 22a5 5 0 0 1 0-9 7 7 0 0 1 12-1 5 5 0 0 1 2 10z" fill="#8c8c8c"/><path d="M30 7l18 17" stroke="#ddd" stroke-width="1.600"/><path d="M60 13q2-7 9-7 5 0 8 4M78 5v6h-6M69 24q-6 0-8-5M60 25v-6h6" stroke="#eee" stroke-width="1.600"/><circle cx="74" cy="20" r="5.500" fill="#ff9d0a"/></svg>
    <p class="lang"><span>ENG</span><span>IN</span></p>
    <svg width="82" height="30" viewBox="0 0 82 30" fill="none" stroke="#fff" stroke-width="1.700"><path d="M1 12q9-8.500 18 0M4 15.500q6-5.500 12 0M7 19q3-3 6 0"/><circle cx="10" cy="21" r="1.300" fill="#fff"/><path d="M31 12.500h3l5-4.500v14l-5-4.500h-3zM42 12q2 3 0 6M45 9.500q4 5.500 0 11M48 7q6 8 0 16" stroke-width="1.400"/><rect x="60" y="9" width="17" height="12" rx="2.500"/><rect x="63" y="12" width="11" height="6" fill="#fff" stroke="none"/><path d="M79 13v4" stroke-width="2.500"/></svg>
    <p class="clock"><span>10:26</span><span>13-04-2023</span></p>
    <b class="notif">6</b>
  </div>
</div>
</body>
</html>
```
FILE: styles.css
```css
* { box-sizing: border-box; }
body { margin: 0; width: 1920px; height: 1080px; overflow: hidden; display: flex; flex-direction: column; background: #f4f4f4; font-family: "Open Sans", "Noto Sans", sans-serif; color: #333; }
p, h1, h2, h3, ul { margin: 0; padding: 0; font-weight: 400; }
svg { display: block; flex: none; }
span, b, em { white-space: nowrap; }
.defs { position: absolute; }

.titlebar { height: 29px; flex: none; display: flex; align-items: center; background: linear-gradient(90deg, #f3f3f3 500px, #f9eef3 800px, #f7eff4 1150px, #f3f3f3 1500px); color: #000; }
.app-icon { width: 18px; height: 19px; margin-left: 3px; background: #fff; border: 1px solid #ccc; display: flex; align-items: center; justify-content: center; color: #4a86ad; }
.app-title { margin-left: 7px; font-size: 14.500px; letter-spacing: -.16px; }
.winctl { margin-left: auto; margin-right: 20px; }

.menubar { height: 25px; flex: none; display: flex; align-items: center; gap: 16.800px; padding: 1px 0 0 8px; background: #fff; color: #000; font-size: 14.500px; letter-spacing: -.28px; }

.toolbar { height: 51px; flex: none; display: flex; align-items: center; padding: 0 30px 2px 16px; border-top: 1px solid #ececec; }
.ic { width: 24px; height: 24px; fill: none; stroke: #b4b4b4; stroke-width: 1.200; }
.on { stroke: #555; }
.caret { width: 8px; height: 8px; color: #b0b0b0; }
.dark { color: #444; }
.sep { width: 1px; height: 35px; background: #cfcfcf; }
.m5 { margin-left: 5px; } .m6 { margin-left: 6px; } .m7 { margin-left: 7px; } .m8 { margin-left: 8px; } .m9 { margin-left: 9px; }
.m10 { margin-left: 10px; } .m11 { margin-left: 11px; } .m13 { margin-left: 13px; } .m14 { margin-left: 14px; } .m15 { margin-left: 15px; } .m16 { margin-left: 16px; } .m17 { margin-left: 17px; }
.combo { width: 127px; height: 28px; margin-left: 20px; border: 1px solid #d2d2d2; border-radius: 2px; display: flex; align-items: center; justify-content: flex-end; padding-right: 7px; }
.showme { margin-left: auto; display: flex; align-items: center; gap: 6px; color: #868686; font: 300 17px Inter, sans-serif; letter-spacing: -.5px; }

.work { height: 852px; flex: none; display: flex; }
.side { width: 262px; display: flex; flex-direction: column; background: #fafafa; border: solid #cbcbcb; border-width: 1px 1px 0 0; font-family: Inter, sans-serif; font-weight: 300; font-feature-settings: "calt" 0; }
.tabs { height: 32px; display: flex; }
.tabs b { width: 117px; padding-left: 22px; font-size: 16.800px; line-height: 30px; font-weight: 600; color: #111; }
.tab2 { flex: 1; border: solid #cbcbcb; border-width: 0 0 1px 1px; display: flex; justify-content: space-between; align-items: center; padding: 0 7px 0 15px; font-size: 17px; letter-spacing: .2px; color: #222; }
.tab2 svg { position: relative; top: -1px; }
h2 { font-size: 16.500px; font-weight: 600; letter-spacing: .1px; }
.newpoint { height: 98px; padding: 22px 22px 0; border-bottom: 1px solid #cbcbcb; }
.newpoint h2 { line-height: 20px; }
.btns { display: flex; justify-content: space-between; margin-top: 16px; }
.btn { width: 101px; height: 23px; border: 1px solid #c4c4c4; border-radius: 2px; background: #fff; display: flex; align-items: center; justify-content: center; font-size: 15px; }
.sheets { height: 463px; padding-top: 22px; list-style: none; border-bottom: 1px solid #cbcbcb; }
.sheets li { height: 25px; display: flex; align-items: center; padding-left: 22px; font-size: 17px; letter-spacing: -.28px; }
.sheets svg { width: 17px; height: 17px; margin-right: 7px; position: relative; top: 2px; }
.hover { background: #f3f3f3; }
.dragtext { height: 85px; padding: 19px 0 0 23px; border-bottom: 1px solid #cbcbcb; display: flex; font-size: 15px; line-height: 20px; }
.dragtext em { width: 23px; font-style: normal; font-weight: 400; color: #666; font-size: 16px; }
.showtitle { height: 56px; display: flex; align-items: center; padding-left: 22px; border-bottom: 1px solid #cbcbcb; font-size: 15px; }
.check { width: 18px; height: 18px; margin-right: 6px; border: 1px solid #666; border-radius: 1px; background: #fff; }
.size { padding: 23px 22px 0; }
.size h2 { line-height: 20px; }
.select { height: 26px; margin-top: 17px; padding: 0 0 2px 1px; border-bottom: 1px solid #c6c6c6; display: flex; align-items: center; justify-content: space-between; font-size: 15px; }

.story { width: 1016px; background: #fff; display: flex; flex-direction: column; font-family: "Noto Sans", sans-serif; }
h1 { height: 61px; padding-left: 12px; font-size: 30.300px; line-height: 60px; color: #333; }
.points { display: flex; gap: 2px; align-items: center; padding-left: 179px; height: 70px; }
.points svg:first-child { margin-right: 9px; }
.points svg:last-child { margin-left: 8px; }
.point { width: 150px; height: 70px; padding: 10px 10px; background: #ececec; color: #6c6c6c; font-size: 15.600px; font-weight: 300; line-height: 22px; }
.point.active { background: #dadada; color: #000; }
.view { margin: 29px 0 0 17px; display: flex; }
.map { width: 822px; height: 692px; }
.labels { font: 500 38px "Noto Sans", sans-serif; fill: #8c8c8c; stroke: #0a0a0a; stroke-width: 6; paint-order: stroke; }
.legend { padding: 3px 0 0 5px; }
.legend h3 { font-size: 14.800px; font-weight: 500; line-height: 21px; letter-spacing: -.15px; color: #333; }
.legend p { height: 21px; display: flex; align-items: center; gap: 5px; padding-left: 3px; font-size: 15.600px; font-weight: 300; letter-spacing: .12px; color: #333; }
.legend i { width: 14px; height: 14px; }
.c1 { background: #4e79a7; } .c2 { background: #f28e2b; } .c3 { background: #e15759; } .c4 { background: #76b7b2; } .c5 { background: #59a14f; } .c6 { background: #edc948; } .c7 { background: #b07aa1; } .c8 { background: #ff9da7; } .c9 { background: #9c755f; }
.scroll { margin-left: auto; width: 21px; border-left: 1px solid #fff; background: #f0f0f0; padding: 21px 0 0 7px; }
.scroll i { display: block; width: 6px; height: 715px; background: #858585; }

.sheettabs { height: 38px; flex: none; display: flex; border: solid #c8c8c8; border-width: 1px 0; background: #e6e6e6; font: 300 15px Inter, sans-serif; letter-spacing: -.1px; color: #444; }
.t { border-right: 1px solid #c8c8c8; display: flex; align-items: center; padding-left: 6px; overflow: hidden; flex: none; }
.t1 { width: 163px; padding-left: 10px; gap: 5px; }
.t2 { width: 111px; padding-left: 0; letter-spacing: -.25px; }
.t3 { width: 233px; } .t4 { width: 250px; } .t5 { width: 131px; } .t6 { width: 250px; letter-spacing: -.16px; } .t7 { width: 250px; }
.t8 { width: 123px; padding-left: 8px; gap: 2px; }
.t9 { width: 236px; padding-left: 6px; gap: 5px; background: #fafafa; font-weight: 600; }
.t10 { width: 78px; }
.add { width: 32px; padding-left: 8px; }

.status { height: 25px; flex: none; display: flex; justify-content: flex-end; background: #ebebeb; }
.status > * { border-left: 1px solid #cfcfcf; }
.s1 { width: 158px; } .s2 { width: 31px; } .s3 { width: 32px; } .s4 { width: 57px; }

.taskbar { height: 60px; flex: none; display: flex; align-items: center; padding-bottom: 2px; border-top: 1px solid #444; color: #fff; font-size: 14.500px; background: linear-gradient(90deg, #202020 500px, #2c1c1f 600px, #38191c 780px, #24202e 880px, #2a1a2e 980px, #38191c 1060px, #38191c 1260px, #202020 1410px); }
.weather { width: 467px; display: flex; align-items: center; padding-left: 24px; gap: 8px; }
.weather p, .lang, .clock { display: flex; flex-direction: column; line-height: 20px; }
.weather small { font-size: 14.500px; letter-spacing: -.2px; color: #ccc; }
.search { width: 125px; height: 40px; margin-left: 16px; border-radius: 20px; background: #ffffff14; display: flex; align-items: center; padding-left: 28px; gap: 5px; letter-spacing: -.15px; }
.apps { display: flex; margin-left: 4px; }
.apps span { width: 55px; height: 50px; display: flex; align-items: center; justify-content: center; position: relative; }
.apps svg { width: 30px; height: 30px; }
.run::after, .act::after { content: ""; position: absolute; bottom: 1px; left: 24px; width: 8px; height: 4px; border-radius: 2px; background: #9d9496; }
.act::before { content: ""; position: absolute; inset: 0 3px 0 2px; border-radius: 5px; background: #ffffff14; border: 1px solid #ffffff10; }
.act svg { position: relative; }
.act::after { left: 18px; width: 19px; background: #4cc2ff; }
.tray { margin-left: auto; display: flex; align-items: center; padding-right: 25px; }
.lang { width: 44px; margin: 0 15px 0 9px; align-items: center; }
.clock { width: 95px; align-items: flex-end; }
.notif { width: 20px; height: 20px; margin-left: 9px; border-radius: 50%; background: #4cc2ff; color: #111; font: 400 12px/20px "Open Sans", sans-serif; text-align: center; }
```
